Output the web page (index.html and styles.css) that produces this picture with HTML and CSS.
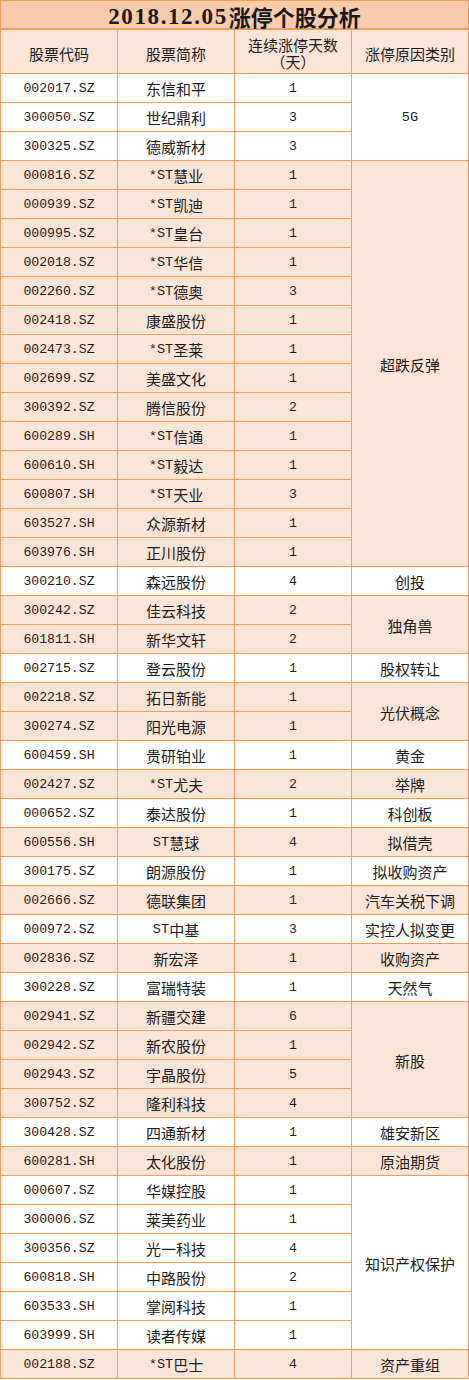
FILE: index.html
```html
<!DOCTYPE html>
<html lang="zh">
<head>
<meta charset="utf-8">
<title>2018.12.05涨停个股分析</title>
<link rel="stylesheet" href="styles.css">
</head>
<body>
<div class="sheet">
  <div class="title"><span class="tnum">2018.12.05</span>涨停个股分析</div>
  <div class="hd">股票代码</div>
  <div class="hd">股票简称</div>
  <div class="hd two"><span class="ln">连续涨停天数</span><span class="ln">（天）</span></div>
  <div class="hd">涨停原因类别</div>

  <div class="c code">002017.SZ</div><div class="c">东信和平</div><div class="c num">1</div><div class="c cat r3"><span class="a">5G</span></div>
  <div class="c code">300050.SZ</div><div class="c">世纪鼎利</div><div class="c num">3</div>
  <div class="c code">300325.SZ</div><div class="c">德威新材</div><div class="c num">3</div>

  <div class="c p code">000816.SZ</div><div class="c p"><span class="a">*ST</span>慧业</div><div class="c p num">1</div><div class="c p cat r14">超跌反弹</div>
  <div class="c p code">000939.SZ</div><div class="c p"><span class="a">*ST</span>凯迪</div><div class="c p num">1</div>
  <div class="c p code">000995.SZ</div><div class="c p"><span class="a">*ST</span>皇台</div><div class="c p num">1</div>
  <div class="c p code">002018.SZ</div><div class="c p"><span class="a">*ST</span>华信</div><div class="c p num">1</div>
  <div class="c p code">002260.SZ</div><div class="c p"><span class="a">*ST</span>德奥</div><div class="c p num">3</div>
  <div class="c p code">002418.SZ</div><div class="c p">康盛股份</div><div class="c p num">1</div>
  <div class="c p code">002473.SZ</div><div class="c p"><span class="a">*ST</span>圣莱</div><div class="c p num">1</div>
  <div class="c p code">002699.SZ</div><div class="c p">美盛文化</div><div class="c p num">1</div>
  <div class="c p code">300392.SZ</div><div class="c p">腾信股份</div><div class="c p num">2</div>
  <div class="c p code">600289.SH</div><div class="c p"><span class="a">*ST</span>信通</div><div class="c p num">1</div>
  <div class="c p code">600610.SH</div><div class="c p"><span class="a">*ST</span>毅达</div><div class="c p num">1</div>
  <div class="c p code">600807.SH</div><div class="c p"><span class="a">*ST</span>天业</div><div class="c p num">3</div>
  <div class="c p code">603527.SH</div><div class="c p">众源新材</div><div class="c p num">1</div>
  <div class="c p code">603976.SH</div><div class="c p">正川股份</div><div class="c p num">1</div>

  <div class="c code">300210.SZ</div><div class="c">森远股份</div><div class="c num">4</div><div class="c cat">创投</div>

  <div class="c p code">300242.SZ</div><div class="c p">佳云科技</div><div class="c p num">2</div><div class="c p cat r2">独角兽</div>
  <div class="c p code">601811.SH</div><div class="c p">新华文轩</div><div class="c p num">2</div>

  <div class="c code">002715.SZ</div><div class="c">登云股份</div><div class="c num">1</div><div class="c cat">股权转让</div>

  <div class="c p code">002218.SZ</div><div class="c p">拓日新能</div><div class="c p num">1</div><div class="c p cat r2">光伏概念</div>
  <div class="c p code">300274.SZ</div><div class="c p">阳光电源</div><div class="c p num">1</div>

  <div class="c code">600459.SH</div><div class="c">贵研铂业</div><div class="c num">1</div><div class="c cat">黄金</div>
  <div class="c p code">002427.SZ</div><div class="c p"><span class="a">*ST</span>尤夫</div><div class="c p num">2</div><div class="c p cat">举牌</div>
  <div class="c code">000652.SZ</div><div class="c">泰达股份</div><div class="c num">1</div><div class="c cat">科创板</div>
  <div class="c p code">600556.SH</div><div class="c p"><span class="a">ST</span>慧球</div><div class="c p num">4</div><div class="c p cat">拟借壳</div>
  <div class="c code">300175.SZ</div><div class="c">朗源股份</div><div class="c num">1</div><div class="c cat">拟收购资产</div>
  <div class="c p code">002666.SZ</div><div class="c p">德联集团</div><div class="c p num">1</div><div class="c p cat">汽车关税下调</div>
  <div class="c code">000972.SZ</div><div class="c"><span class="a">ST</span>中基</div><div class="c num">3</div><div class="c cat">实控人拟变更</div>
  <div class="c p code">002836.SZ</div><div class="c p">新宏泽</div><div class="c p num">1</div><div class="c p cat">收购资产</div>
  <div class="c code">300228.SZ</div><div class="c">富瑞特装</div><div class="c num">1</div><div class="c cat">天然气</div>

  <div class="c p code">002941.SZ</div><div class="c p">新疆交建</div><div class="c p num">6</div><div class="c p cat r4">新股</div>
  <div class="c p code">002942.SZ</div><div class="c p">新农股份</div><div class="c p num">1</div>
  <div class="c p code">002943.SZ</div><div class="c p">宇晶股份</div><div class="c p num">5</div>
  <div class="c p code">300752.SZ</div><div class="c p">隆利科技</div><div class="c p num">4</div>

  <div class="c code">300428.SZ</div><div class="c">四通新材</div><div class="c num">1</div><div class="c cat">雄安新区</div>
  <div class="c p code">600281.SH</div><div class="c p">太化股份</div><div class="c p num">1</div><div class="c p cat">原油期货</div>

  <div class="c code">000607.SZ</div><div class="c">华媒控股</div><div class="c num">1</div><div class="c cat r6">知识产权保护</div>
  <div class="c code">300006.SZ</div><div class="c">莱美药业</div><div class="c num">1</div>
  <div class="c code">300356.SZ</div><div class="c">光一科技</div><div class="c num">4</div>
  <div class="c code">600818.SH</div><div class="c">中路股份</div><div class="c num">2</div>
  <div class="c code">603533.SH</div><div class="c">掌阅科技</div><div class="c num">1</div>
  <div class="c code">603999.SH</div><div class="c">读者传媒</div><div class="c num">1</div>

  <div class="c p code">002188.SZ</div><div class="c p"><span class="a">*ST</span>巴士</div><div class="c p num">4</div><div class="c p cat">资产重组</div>
</div>
</body>
</html>
```

FILE: styles.css
```css
html, body {
  margin: 0;
  padding: 0;
  background: #ffffff;
}

.sheet {
  width: 469px;
  box-sizing: border-box;
  display: grid;
  grid-template-columns: repeat(4, 116px);
  grid-template-rows: 28px 43px;
  grid-auto-rows: 28px;
  gap: 1px;
  padding: 1px;
  background: #f29d5b;
  font-family: "Noto Sans CJK SC", sans-serif;
  font-size: 15px;
  color: #1c1c1c;
}

.title {
  grid-column: 1 / span 4;
  height: 27px;
  align-self: start;
  background: #f8cbad;
  display: flex;
  align-items: center;
  justify-content: center;
  padding-top: 4px;
  box-sizing: border-box;
  font-size: 22px;
  font-weight: bold;
  line-height: 23px;
  color: #1a1a1a;
}

.tnum {
  font-family: "Liberation Serif", serif;
  font-size: 23px;
  letter-spacing: 1.6px;
  margin-right: 1px;
}

.hd {
  background: #fce4d6;
  display: flex;
  align-items: center;
  justify-content: center;
  text-align: center;
  padding-top: 3px;
  box-sizing: border-box;
  line-height: 17px;
}

.hd.two {
  flex-direction: column;
  padding-top: 2px;
}

.ln {
  display: block;
  height: 17px;
  line-height: 17px;
}

.c {
  background: #ffffff;
  display: flex;
  align-items: center;
  justify-content: center;
  padding-top: 2px;
  box-sizing: border-box;
  line-height: 18px;
  white-space: nowrap;
}

.c.p {
  background: #fce4d6;
}

.cat {
  grid-column: 4;
}

.r2 { grid-row: span 2; }
.r3 { grid-row: span 3; }
.r4 { grid-row: span 4; }
.r6 { grid-row: span 6; }
.r14 { grid-row: span 14; }

.code, .num, .a {
  font-family: "Liberation Mono", monospace;
  font-size: 13.2px;
}

.a {
  font-size: 13.6px;
}
```
